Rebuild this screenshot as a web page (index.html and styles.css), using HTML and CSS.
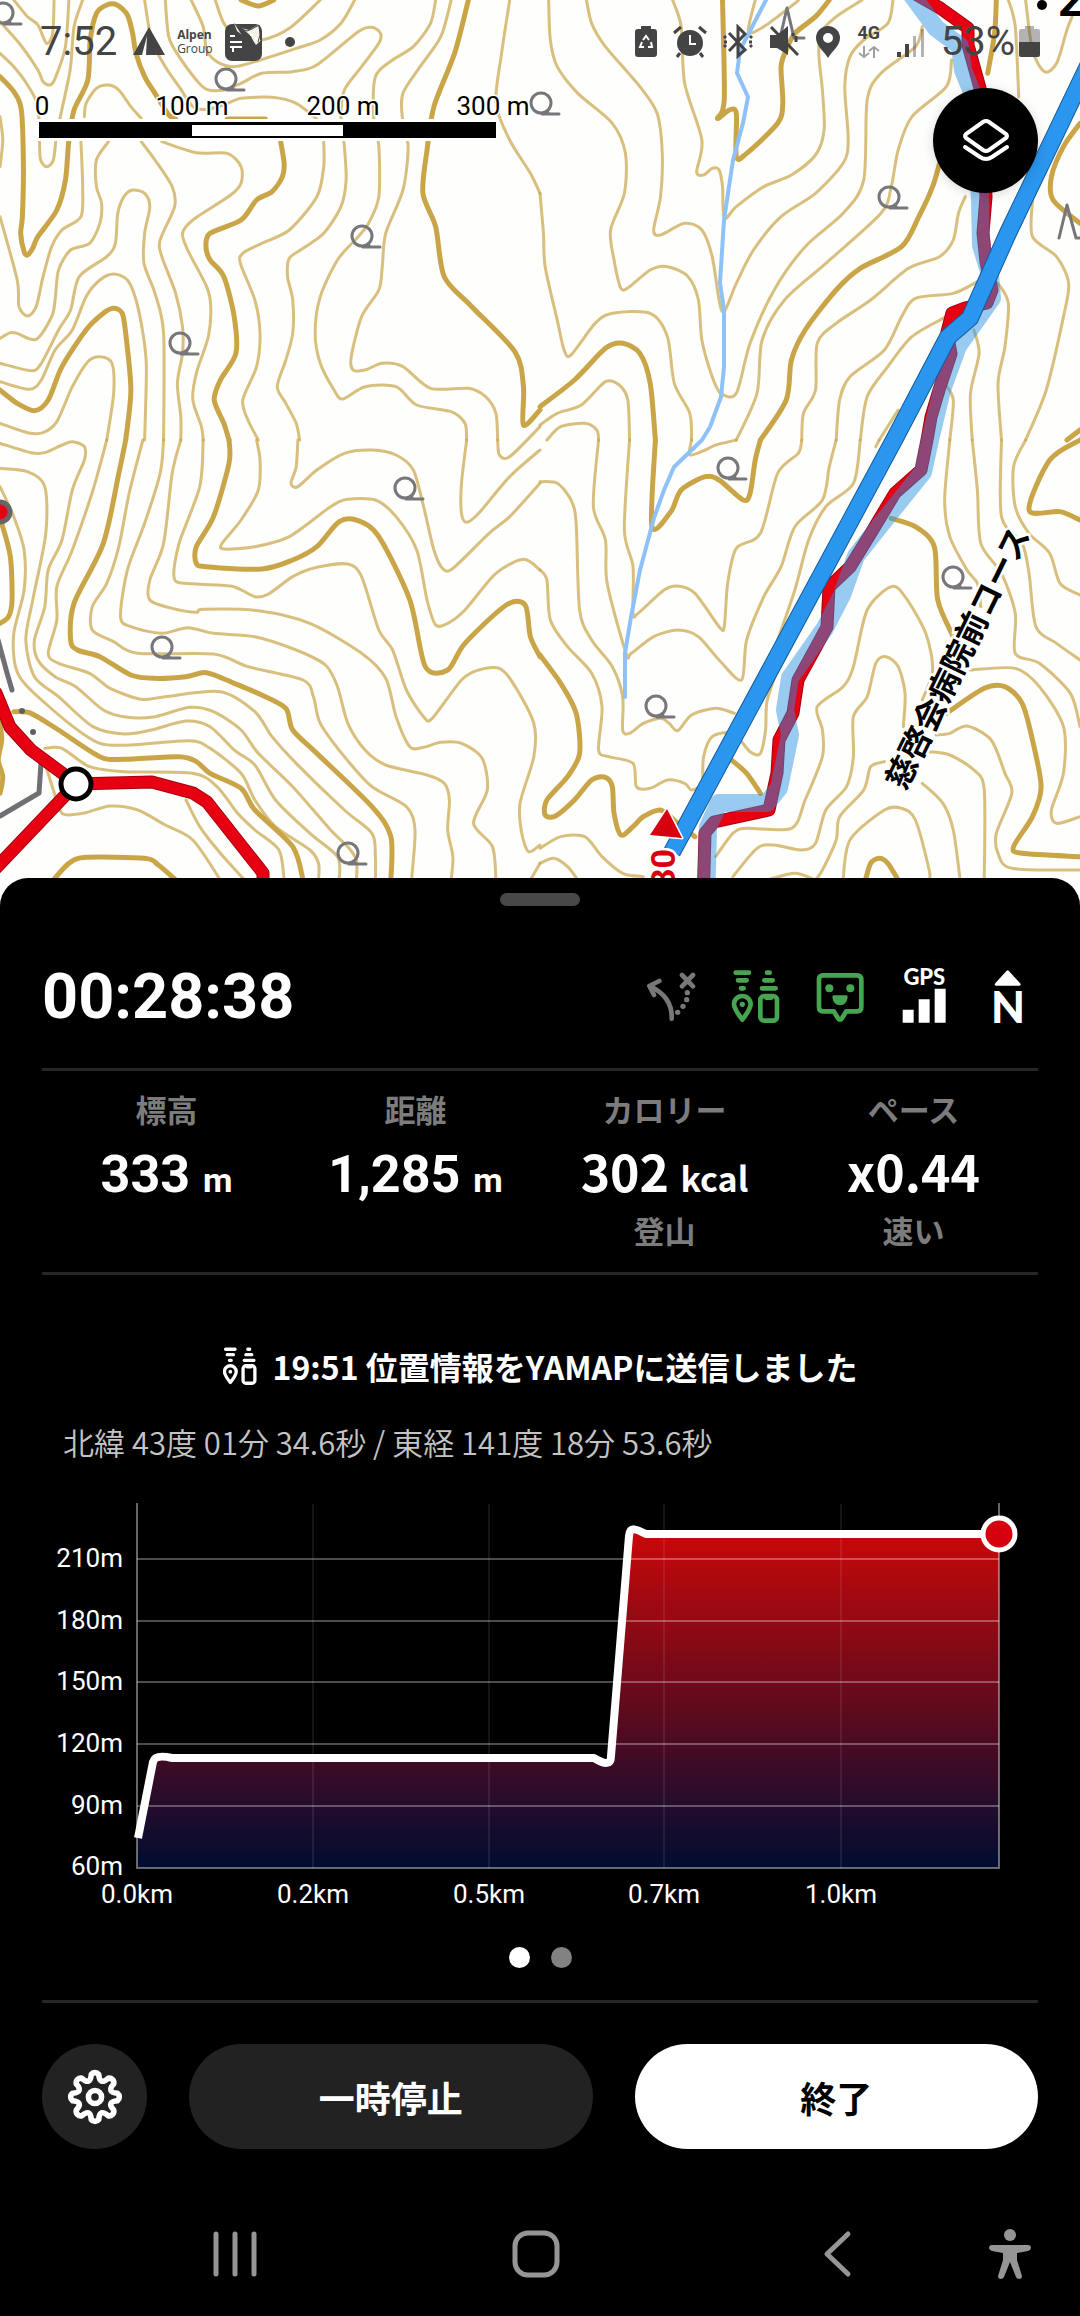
FILE: index.html
```html
<!DOCTYPE html>
<html lang="ja">

<head>
    <meta charset="UTF-8">
    <meta name="viewport" content="width=device-width, initial-scale=1.0">
    <title>YAMAP - 活動記録</title>
    <link rel="stylesheet" href="styles.css">
</head>

<body>
    <section class="map">
        <svg class="map-canvas" viewBox="0 0 1080 906" preserveAspectRatio="xMidYMin slice" aria-label="地図">
            <defs>
                <g id="broadleaf">
                    <circle r="10"></circle>
                    <path d="M6 8L8 11M1 11H18"></path>
                </g>
            </defs>

            <g id="contours"></g>

            <!-- River -->
            <path class="river" d="M766 0L752 27L740 50L737 73L748 97L743 123L733 160L724 220L720 283L724 310V367L721 397L710 427L702 440L674 467L664 490L654 518L640 570L631 617L625 653V697"></path>

            <!-- Side road -->
            <path class="road" d="M-2 640L7 673L12 690M41 763L39 793L0 816"></path>
            <circle class="road-dot" cx="22" cy="711" r="3"></circle>
            <circle class="road-dot" cx="33" cy="732" r="3"></circle>

            <g class="vegetation">
                <use href="#broadleaf" x="3" y="13"></use>
                <use href="#broadleaf" x="226" y="79"></use>
                <use href="#broadleaf" x="362" y="236"></use>
                <use href="#broadleaf" x="180" y="343"></use>
                <use href="#broadleaf" x="541" y="103"></use>
                <use href="#broadleaf" x="889" y="197"></use>
                <use href="#broadleaf" x="405" y="488"></use>
                <use href="#broadleaf" x="162" y="647"></use>
                <use href="#broadleaf" x="348" y="853"></use>
                <use href="#broadleaf" x="728" y="468"></use>
                <use href="#broadleaf" x="953" y="577"></use>
                <use href="#broadleaf" x="656" y="706"></use>
                <path d="M780 38L787 8L794 38H804M1059 238L1067 205L1076 238H1086"></path>
            </g>

            <!-- Trails -->
            <g class="trail">
                <path class="trail-edge" d="M-4 693L10 727L31 750L62 773L75 784L152 782L193 793L207 802L263 873V906M75 785L-4 868"></path>
                <path class="trail-line" d="M-4 693L10 727L31 750L62 773L75 784L152 782L193 793L207 802L263 873V906M75 785L-4 868"></path>
                <path class="trail-edge" d="M912 -8L940 8L968 28L968 45L980 88L986 197L983 233L986 262L992 290L987 303L965 308L952 313L947 332L951 354L939 390L931 417L927 440L921 470L895 493L871 533L850 567L829 587L827 627L798 680L793 713L779 740L777 773L769 810L714 822L705 833L703 906"></path>
                <path class="trail-line" d="M912 -8L940 8L968 28L968 45L980 88L986 197L983 233L986 262L992 290L987 303L965 308L952 313L947 332L951 354L939 390L931 417L927 440L921 470L895 493L871 533L850 567L829 587L827 627L798 680L793 713L779 740L777 773L769 810L714 822L705 833L703 906"></path>
            </g>
            <path class="traffic" d="M911 -6L936 28L960 46L963 70L972 92L980 200L981 245L990 275L992 298L958 346L942 390L930 440L923 472L882 523L856 556L842 595L825 628L790 678L785 710L790 735L779 788L767 803L719 803L708 827L706 906"></path>
            <path class="track-edge" d="M1100 41L1008 233L970 318L948 337L894 440L672 852"></path>
            <path class="track-line" d="M1100 41L1008 233L970 318L948 337L894 440L672 852"></path>

            <circle class="junction-off" cx="0" cy="512" r="10"></circle>
            <circle class="junction" cx="76" cy="784" r="15"></circle>

            <path class="arrow" d="M667 809L682 838L650 835Z"></path>
            <text class="minutes" transform="translate(675 849) rotate(-90)" text-anchor="end">30</text>
            <text class="course" transform="translate(958 658) rotate(-64)" text-anchor="middle" dy="11">慈啓会病院前コース</text>
            <circle cx="1042" cy="5" r="5"></circle>
            <text class="height-mark" x="1058" y="16">2</text>
        </svg>

        <header class="status-bar">
            <div class="status-group">
                <span class="status-text">7:52</span>
                <svg class="tent" width="32" height="36" viewBox="0 0 32 36"><path d="M16 3L32 31H13L14 12L9 31H0Z"></path></svg>
                <span class="alpen"><b>Alpen</b><span>Group</span></span>
                <svg width="38" height="38" viewBox="0 0 38 38">
                    <rect x="0" y="1" width="37" height="37" rx="7"></rect>
                    <path class="paper" d="M9 0L16 5L24 7L33 2L35 9V18L31 22L27 16L20 14L12 8Z"></path>
                    <path d="M9 0L18 14L30 23L26 13L18 6Z"></path>
                    <path class="sketch" d="M5 13H10M5 19H17M5 24H17M8 25V29M25 12H28M30 15L35 18"></path>
                    <path class="ears" d="M15 5L22 8L27 6L34 2L35 12L33 19"></path>
                </svg>
                <svg class="more" width="10" height="10" viewBox="0 0 10 10"><circle cx="5" cy="5" r="5"></circle></svg>
            </div>

            <div class="status-group status-right">
                <svg width="22" height="36" viewBox="0 0 22 36">
                    <path d="M6 2H16V5H19Q22 5 22 8V30Q22 33 19 33H3Q0 33 0 30V8Q0 5 3 5H6Z"></path>
                    <path class="sketch" d="M8 16L11 12L14 16M16 18L17 23H13M9 23H5L7 18"></path>
                </svg>
                <svg width="34" height="36" viewBox="0 0 34 36">
                    <circle cx="17" cy="19" r="13"></circle>
                    <path class="stroke" d="M1 9L8 3M33 9L26 3M7 29L4 33M27 29L30 33"></path>
                    <path class="sketch" d="M17 11V20H23"></path>
                </svg>
                <svg width="30" height="36" viewBox="0 0 30 36">
                    <path class="stroke" d="M6 9L22 26L15 32V3L22 10L6 27M1 12L3 14M1 23L3 21M27 14L29 12M27 21L29 23M1 18H4M26 18H29"></path>
                </svg>
                <svg width="30" height="36" viewBox="0 0 30 36">
                    <path d="M1 11H8L19 2V31L8 24H1Z"></path>
                    <path class="stroke" d="M2 3L29 31M24 9V12M27 12V18"></path>
                </svg>
                <svg width="26" height="36" viewBox="0 0 26 36">
                    <path fill-rule="evenodd" d="M13 2a12 12 0 0 1 12 12c0 8-8 13-12 20c-4-7-12-12-12-20a12 12 0 0 1 12-12zM13 9a5 5 0 1 0 0 10a5 5 0 1 0 0-10z"></path>
                </svg>
                <span class="network">4G
                    <svg width="22" height="14" viewBox="0 0 22 14"><path d="M6 1V12M1 8L6 12L11 8M16 13V2M11 6L16 2L21 6"></path></svg>
                </span>
                <svg width="28" height="36" viewBox="0 0 28 36">
                    <path d="M0 28H4V33H0zM8 20H12V33H8z"></path>
                    <path class="faded" d="M16 12H19V33H16zM24 5H27V33H24z"></path>
                </svg>
                <span class="battery">
                    <span class="status-text">53%</span>
                    <svg width="21" height="36" viewBox="0 0 21 36">
                        <path class="faded" d="M6 2H15V5H19Q21 5 21 7V18H0V7Q0 5 2 5H6Z"></path>
                        <path d="M0 18H21V31Q21 33 19 33H2Q0 33 0 31Z"></path>
                    </svg>
                </span>
            </div>
        </header>

        <svg class="scale-bar" width="540" height="60" viewBox="0 0 540 60" aria-label="縮尺">
            <rect class="scale-halo" x="36" y="34" width="463" height="22"></rect>
            <rect x="39" y="37" width="457" height="16"></rect>
            <rect class="scale-halo" x="192" y="40" width="151" height="11"></rect>
            <text x="42" y="30">0</text>
            <text x="192" y="30">100 m</text>
            <text x="343" y="30">200 m</text>
            <text x="493" y="30">300 m</text>
        </svg>

        <button class="layer-button" type="button" aria-label="レイヤー">
            <svg width="48" height="48" viewBox="0 0 48 48">
                <path d="M21 5Q24 3 27 5L44 17Q46 19 44 21L27 33Q24 35 21 33L4 21Q2 19 4 17ZM3 30L18 40Q24 44 30 40L45 30"></path>
            </svg>
        </button>
    </section>

    <main class="sheet">
        <div class="handle"></div>

        <div class="sheet-header">
            <h1>00:28:38</h1>
            <div class="indicators">
                <svg class="icon icon-off" viewBox="0 0 180 180">
                    <path d="M89 155Q92 90 25 58M52 42L22 57L36 84M120 24L153 58M153 24L120 58"></path>
                    <g class="solid">
                        <circle cx="107" cy="136" r="8"></circle>
                        <circle cx="123" cy="118" r="8"></circle>
                        <circle cx="134" cy="98" r="8"></circle>
                        <circle cx="136" cy="77" r="8"></circle>
                    </g>
                </svg>
                <svg class="icon icon-on" viewBox="0 0 180 180">
                    <g id="watch">
                        <path d="M29 17H69M36 40H62M45 64H53M123 17H131M115 40H140M108 64H149"></path>
                        <path d="M49 158C32 136 24 124 24 112A25 25 0 0 1 74 112C74 124 66 136 49 158Z"></path>
                        <circle class="solid" cx="49" cy="112" r="8"></circle>
                        <rect x="103" y="87" width="50" height="74" rx="12"></rect>
                        <path d="M121 92H135"></path>
                    </g>
                </svg>
                <svg class="icon icon-on" viewBox="0 0 180 180">
                    <path d="M39 25H141Q154 25 154 38V120Q154 133 141 133H109L96 154Q90 162 84 154L71 133H39Q27 133 27 120V38Q27 25 39 25Z"></path>
                    <g class="solid">
                        <circle cx="58" cy="64" r="12"></circle>
                        <circle cx="121" cy="64" r="12"></circle>
                        <path d="M72 85H109Q113 85 113 90Q110 115 90 115Q70 115 67 90Q67 85 72 85Z"></path>
                    </g>
                </svg>
                <svg class="icon icon-text" viewBox="0 0 180 180">
                    <text x="91" y="55" font-size="66">GPS</text>
                    <path d="M26 128H59V167H26zM74 97H107V167H74zM122 65H155V167H122z"></path>
                </svg>
                <svg class="icon icon-text" viewBox="0 0 180 180">
                    <path class="tip" d="M89 14L124 52H54Z"></path>
                    <text x="90" y="167" font-size="132">N</text>
                </svg>
            </div>
        </div>

        <dl class="stats">
            <div class="stat">
                <dt>標高</dt>
                <dd>333 <small>m</small></dd>
            </div>
            <div class="stat">
                <dt>距離</dt>
                <dd>1,285 <small>m</small></dd>
            </div>
            <div class="stat stat-jp">
                <dt>カロリー</dt>
                <dd>302 <small>kcal</small></dd>
                <dd class="note">登山</dd>
            </div>
            <div class="stat stat-jp">
                <dt>ペース</dt>
                <dd>x0.44</dd>
                <dd class="note">速い</dd>
            </div>
        </dl>

        <p class="message">
            <svg class="icon icon-small" viewBox="18 8 144 160"><use href="#watch"></use></svg>
            19:51 位置情報をYAMAPに送信しました
        </p>
        <p class="position">北緯 43度 01分 34.6秒 / 東経 141度 18分 53.6秒</p>

        <svg class="chart" viewBox="0 0 1080 440" aria-label="標高グラフ">
            <defs>
                <linearGradient id="elevation" gradientUnits="userSpaceOnUse" x1="0" y1="54" x2="0" y2="388">
                    <stop offset="0" stop-color="#c8080a"></stop>
                    <stop offset="0.5" stop-color="#640a1c"></stop>
                    <stop offset="0.8" stop-color="#270c2b"></stop>
                    <stop offset="1" stop-color="#000c30"></stop>
                </linearGradient>
            </defs>
            <path class="area" d="M137 388V358L152 280Q154 276 172 278H594Q611 290 612 276L628 54Q632 44 646 54H999V388Z"></path>
            <path class="grid" d="M137 79H999M137 141H999M137 202H999M137 264H999M137 326H999"></path>
            <path class="grid-weak" d="M313 24V388M489 24V388M664 24V388M841 24V388"></path>
            <path class="axis" d="M137 23V388H999V23"></path>
            <path class="line" d="M138 358L153 282Q155 274 172 278H594C604 284 611 286 611 276L629 56C630 46 636 49 646 54H999"></path>
            <circle class="current" cx="999" cy="54" r="16"></circle>
            <g class="label-y">
                <text x="123" y="87">210m</text>
                <text x="123" y="149">180m</text>
                <text x="123" y="210">150m</text>
                <text x="123" y="272">120m</text>
                <text x="123" y="334">90m</text>
                <text x="123" y="395">60m</text>
            </g>
            <g class="label-x">
                <text x="137" y="423">0.0km</text>
                <text x="313" y="423">0.2km</text>
                <text x="489" y="423">0.5km</text>
                <text x="664" y="423">0.7km</text>
                <text x="841" y="423">1.0km</text>
            </g>
        </svg>

        <div class="pager">
            <button class="dot active" type="button" aria-label="1ページ"></button>
            <button class="dot" type="button" aria-label="2ページ"></button>
        </div>

        <div class="actions">
            <button class="settings" type="button" aria-label="設定">
                <svg width="58" height="58" viewBox="-31 -31 62 62">
                    <path d="M-4 -24A5 5 0 0 1 4 -24Q5 -12 14 -20A5 5 0 0 1 20 -14Q12 -5 24 -4A5 5 0 0 1 24 4Q12 5 20 14A5 5 0 0 1 14 20Q5 12 4 24A5 5 0 0 1 -4 24Q-5 12 -14 20A5 5 0 0 1 -20 14Q-12 5 -24 4A5 5 0 0 1 -24 -4Q-12 -5 -20 -14A5 5 0 0 1 -14 -20Q-5 -12 -4 -24Z"></path>
                    <circle r="7"></circle>
                </svg>
            </button>
            <button class="pause" type="button">一時停止</button>
            <button class="finish" type="button">終了</button>
        </div>

        <nav class="nav-bar">
            <button type="button" aria-label="履歴">
                <svg width="46" height="52" viewBox="0 0 46 52"><path d="M4 6V46M23 6V46M42 6V46"></path></svg>
            </button>
            <button type="button" aria-label="ホーム">
                <svg width="52" height="52" viewBox="0 0 52 52"><rect x="5" y="5" width="42" height="42" rx="13"></rect></svg>
            </button>
            <button type="button" aria-label="戻る">
                <svg width="30" height="52" viewBox="0 0 30 52"><path d="M26 6L5 26L26 46"></path></svg>
            </button>
            <button type="button" aria-label="ユーザー補助">
                <svg class="person" width="44" height="52" viewBox="0 0 44 52">
                    <circle cx="22" cy="7" r="6"></circle>
                    <path d="M4 17H40Q43 17 43 20Q43 22 40 23L29 25V32L34 48Q34 51 31 51Q29 51 28 49L22 34L16 49Q15 51 13 51Q10 51 10 48L15 32V25L4 23Q1 22 1 20Q1 17 4 17Z"></path>
                </svg>
            </button>
        </nav>
    </main>

    <script src="script.js"></script>
</body>

</html>
```
FILE: styles.css
```css
:root {
    --sheet: #000000;
    --surface: #222222;
    --divider: #262626;
    --muted: #7c7c7c;
    --green: #47a551;
    --red: #e60012;
    --track: #2b96ee;
    --contour: #c9a548;
    --status: #444444;
    --gutter: 42px;
}

* {
    margin: 0;
    padding: 0;
    box-sizing: border-box;
}

body {
    font-family: Roboto, 'Noto Sans CJK JP', sans-serif;
    background-color: var(--sheet);
    color: #ffffff;
    display: flex;
    flex-direction: column;
    min-height: 100vh;
    overflow-x: hidden;
}

button {
    border: none;
    background: none;
    color: inherit;
    font-family: inherit;
    cursor: pointer;
    display: flex;
    align-items: center;
    justify-content: center;
}

/* Map */
.map {
    position: relative;
    flex: 1;
    min-height: 400px;
    background-color: #fefefd;
    overflow: hidden;
}

.map-canvas {
    position: absolute;
    width: 100%;
    height: 100%;
}

.map-canvas path {
    fill: none;
    stroke-linecap: round;
    stroke-linejoin: round;
}

.contour {
    stroke: var(--contour);
    stroke-width: 3px;
    opacity: 0.7;
    vector-effect: non-scaling-stroke;
}

.contour.index {
    stroke-width: 5px;
    opacity: 1;
}

.river {
    stroke: #8dc1f8;
    stroke-width: 4px;
}

.road {
    stroke: #707074;
    stroke-width: 5px;
}

.road-dot {
    fill: #606064;
}

.vegetation {
    fill: none;
    stroke: #77777b;
    stroke-width: 3px;
}

.trail-edge {
    stroke: #a3000f;
    stroke-width: 13px;
}

.trail-line {
    stroke: var(--red);
    stroke-width: 11px;
}

.traffic {
    stroke: rgba(43, 147, 225, 0.48);
    stroke-width: 18px;
}

.track-edge {
    stroke: #145a9e;
    stroke-width: 18px;
}

.track-line {
    stroke: var(--track);
    stroke-width: 16px;
}

.map-canvas .track-edge,
.map-canvas .track-line {
    stroke-linecap: butt;
}

.junction {
    fill: #ffffff;
    stroke: #000000;
    stroke-width: 5px;
}

.junction-off {
    fill: var(--red);
    stroke: #66666a;
    stroke-width: 5px;
}

.map-canvas .arrow {
    fill: #d7000f;
    stroke: #ffffff;
    stroke-width: 3px;
    paint-order: stroke;
}

.minutes,
.course {
    font-weight: 700;
    stroke: #ffffff;
    stroke-width: 5px;
    paint-order: stroke;
}

.minutes {
    fill: #d7000f;
    font-size: 34px;
}

.course {
    font-size: 32px;
}

.height-mark {
    font-size: 46px;
    font-weight: 700;
}

.status-bar {
    position: absolute;
    top: 0;
    left: 0;
    width: 100%;
    height: 84px;
    padding: 0 40px;
    display: flex;
    align-items: center;
    justify-content: space-between;
    color: var(--status);
    fill: var(--status);
}

.status-group {
    display: flex;
    align-items: center;
    gap: 12px;
}

.status-right {
    gap: 16px;
}

.status-text {
    font-size: 40px;
    line-height: 44px;
}

.tent {
    margin-left: 4px;
}

.more {
    margin-left: 10px;
}

.alpen {
    display: flex;
    flex-direction: column;
    font-family: 'Open Sans', sans-serif;
    font-size: 12px;
    line-height: 14px;
}

.paper {
    fill: #f6f2e6;
}

.sketch,
.stroke,
.ears {
    fill: none;
    stroke: #ffffff;
    stroke-width: 2px;
}

.stroke {
    stroke: var(--status);
    stroke-width: 3px;
}

.ears {
    stroke: var(--status);
    stroke-width: 1px;
}

.faded {
    opacity: 0.4;
}

.network {
    display: flex;
    flex-direction: column;
    align-items: center;
    gap: 4px;
    width: 24px;
    font-size: 18px;
    font-weight: 700;
    line-height: 16px;
}

.network path {
    fill: none;
    stroke: #a0a0a0;
    stroke-width: 2px;
}

.battery {
    display: flex;
    align-items: center;
    gap: 4px;
}

.scale-bar {
    position: absolute;
    top: 85px;
    left: 0;
    font-size: 26px;
    text-anchor: middle;
}

.scale-bar text {
    stroke: #ffffff;
    stroke-width: 3px;
    paint-order: stroke;
}

.scale-halo {
    fill: #ffffff;
}

.layer-button {
    position: absolute;
    top: 88px;
    right: var(--gutter);
    width: 105px;
    height: 105px;
    border-radius: 50%;
    background-color: #000000;
    box-shadow: 0 2px 12px rgba(0, 0, 0, 0.15);
}

.layer-button path {
    fill: none;
    stroke: #ffffff;
    stroke-width: 4px;
    stroke-linecap: round;
}

/* Bottom sheet */
.sheet {
    position: relative;
    margin-top: -28px;
    padding-top: 15px;
    border-radius: 28px 28px 0 0;
    background-color: var(--sheet);
}

.handle {
    width: 80px;
    height: 13px;
    margin: 0 auto;
    border-radius: 7px;
    background-color: #484848;
}

.sheet-header {
    display: flex;
    align-items: center;
    justify-content: space-between;
    margin: 0 var(--gutter);
    padding: 55px 0 35px;
    border-bottom: 3px solid var(--divider);
}

.sheet-header h1 {
    font-size: 63px;
    font-weight: 700;
    line-height: 72px;
}

.indicators {
    display: flex;
    gap: 24px;
}

.icon {
    width: 60px;
    height: 60px;
    fill: none;
    stroke: currentColor;
    stroke-width: 14px;
    stroke-linecap: round;
    stroke-linejoin: round;
}

.icon .solid {
    fill: currentColor;
    stroke: none;
}

.icon-off {
    color: #787878;
}

.icon-on {
    color: var(--green);
}

.icon-text {
    fill: #ffffff;
    stroke: none;
    font-family: Lato, sans-serif;
    font-weight: 900;
    text-anchor: middle;
}

.icon-text .tip {
    stroke: #ffffff;
    stroke-width: 8px;
}

.icon-small {
    width: 34px;
    height: 38px;
}

.stats {
    display: grid;
    grid-template-columns: repeat(4, 1fr);
    margin: 0 var(--gutter);
    padding: 16px 0 20px;
    border-bottom: 3px solid var(--divider);
    text-align: center;
}

.stat dt,
.stat .note {
    color: var(--muted);
    font-family: 'Noto Sans CJK JP', sans-serif;
    font-size: 31px;
    font-weight: 700;
    line-height: 44px;
}

.stat dd {
    font-size: 52px;
    font-weight: 700;
    line-height: 60px;
    margin-top: 14px;
}

.stat-jp dd {
    font-family: 'Noto Sans CJK JP', sans-serif;
    font-size: 50px;
    margin-top: 9px;
}

.stat .note {
    margin-top: 8px;
}

.stat small {
    font-size: 34px;
    line-height: 44px;
}

.message {
    display: flex;
    align-items: center;
    justify-content: center;
    gap: 16px;
    padding-top: 69px;
    font-family: 'Noto Sans CJK JP', sans-serif;
    font-size: 32px;
    font-weight: 700;
    line-height: 44px;
}

.position {
    margin: 32px 63px 16px;
    color: #c4c4c4;
    font-family: 'Noto Sans CJK JP', sans-serif;
    font-size: 31px;
    font-weight: 350;
    line-height: 44px;
}

.chart {
    display: block;
    width: 100%;
    fill: none;
    font-size: 26px;
}

.area {
    fill: url(#elevation);
}

.grid,
.grid-weak,
.axis {
    stroke: rgba(255, 255, 255, 0.3);
    stroke-width: 2px;
}

.grid-weak {
    stroke: rgba(255, 255, 255, 0.08);
}

.axis {
    stroke: rgba(255, 255, 255, 0.4);
}

.line {
    stroke: #ffffff;
    stroke-width: 8px;
    stroke-linejoin: round;
}

.current {
    fill: #d7000f;
    stroke: #ffffff;
    stroke-width: 5px;
}

.label-x,
.label-y {
    fill: #ffffff;
    text-anchor: middle;
}

.label-y {
    text-anchor: end;
}

.pager {
    display: flex;
    justify-content: center;
    gap: 21px;
    padding: 27px 0 32px;
}

.dot {
    width: 21px;
    height: 21px;
    border-radius: 50%;
    background-color: #828282;
}

.dot.active {
    background-color: #ffffff;
}

.actions {
    display: grid;
    grid-template-columns: 105px 1fr 1fr;
    gap: var(--gutter);
    margin: 0 var(--gutter);
    padding: 41px 0 43px;
    border-top: 3px solid var(--divider);
}

.actions button {
    height: 105px;
    border-radius: 53px;
    background-color: var(--surface);
    font-family: 'Noto Sans CJK JP', sans-serif;
    font-size: 36px;
    font-weight: 700;
}

.actions .finish {
    background-color: #ffffff;
    color: #000000;
}

.settings svg {
    fill: none;
    stroke: #ffffff;
    stroke-width: 6px;
    stroke-linejoin: round;
}

.nav-bar {
    display: grid;
    grid-template-columns: 1fr 1fr 1fr 44px;
    height: 124px;
    padding: 0 48px 0 84px;
}

.nav-bar svg {
    fill: none;
    stroke: #959595;
    stroke-width: 5px;
    stroke-linecap: round;
    stroke-linejoin: round;
}

.nav-bar .person {
    fill: #959595;
    stroke: none;
}
```
FILE: script.js
```js
// Contour lines by map tile. Points are in tile units (1568 x 1320 per tile).
const tiles = [
    {
        x: 0, y: 0,
        index: [
            '0,230 40,275 62,330 68,500 65,650 60,700 70,755 80,765 95,745 110,710 165,630 190,540 200,420 215,330 255,240 262,120 280,40 310,15 340,15 370,45 385,100 395,160 420,230 450,280 490,345 510,357',
            '700,0 750,18 795,0',
            '660,357 770,357',
            '1360,0 1320,160 1260,320 1240,450 1228,580 1265,680 1290,830 1370,920 1495,1055 1520,1160 1520,1275 1568,1230',
            '815,425 825,490 820,530 790,575 745,600 700,660 610,700 598,740 610,780 650,830 680,950 685,1060 640,1140 622,1200 650,1270 665,1320',
            '0,1170 50,1210 100,1232 140,1200 180,1100 250,990 300,940 330,925 355,940 365,1000 380,1170 365,1320'
        ],
        minor: [
            '40,0 80,50 110,75 135,130 153,100 157,0',
            '0,65 60,135 110,210 125,245 145,255 160,235 190,140 200,0',
            '0,160 40,200 80,255 110,320 115,440 118,480 135,500 155,480 165,400 190,280 205,200 215,80 240,0',
            '245,350 250,310 280,265 315,255 345,270 380,320 410,355',
            '420,0 440,120 480,200 520,260 560,320 600,328 650,315 700,295 790,292 860,310 920,357',
            '480,0 490,110 520,170 570,240 600,268 650,270 700,250 760,220 850,215 920,195 1040,95 1080,82 1105,100 1100,130 1050,200 1000,270 990,350 1000,440 1005,540 990,620 940,700 880,745 840,775 835,830 850,900 850,1000 830,1080 805,1160 830,1210 860,1270 870,1320',
            '555,0 590,80 600,150 630,185 680,200 740,185 860,145 930,120 990,70 1030,0',
            '625,0 650,70 690,115 760,120 840,85 930,0',
            '1265,0 1250,70 1200,140 1140,180 1090,230 1085,350 1100,440 1100,590 1070,670 1040,710 980,780 930,890 915,1000 930,1090 970,1170 995,1197 1060,1160 1150,1160 1210,1215 1310,1235 1350,1270 1355,1320',
            '1310,0 1280,110 1220,200 1170,280 1168,350 1185,440 1170,570 1120,700 1110,800 1100,870 1050,950 1020,1070 1025,1110 1060,1110 1110,1090 1170,1100 1250,1165 1360,1165 1410,1190 1440,1240 1445,1320',
            '1480,0 1455,170 1440,310 1480,420 1540,520 1568,580',
            '470,425 570,458 660,460 700,500 700,550 670,585 560,660 530,700 545,750 600,860 612,920 605,1010 570,1120 560,1200 585,1280 590,1320',
            '940,425 940,500 920,590 840,690 760,730 705,760 698,790 740,900 755,1000 745,1100 705,1200 720,1260 750,1320',
            '410,425 450,480 500,560 507,620 465,720 470,770 510,880 530,980 530,1060 515,1150 525,1250 525,1320',
            '315,425 280,480 280,560 295,610 290,670 260,730 205,750 170,810 160,900 150,950 105,1018 50,1000 30,998 0,1015',
            '235,425 240,560 235,650 180,690 150,740 125,830 105,920 80,948 55,920 50,840 0,650',
            '0,350 8,420 0,500',
            '0,1090 90,1112 120,1090 170,990 205,930 230,830 310,770 335,730 342,640 360,590 385,570 420,580 435,620 420,700 418,790 450,880 475,1000 475,1320',
            '0,1145 85,1168 120,1140 160,1050 210,990 250,890 290,840 330,822 370,840 395,900 415,1000 425,1100 420,1320',
            '0,1270 80,1298 125,1298 165,1265 210,1160 255,1085 290,1070 325,1090 330,1180 310,1320'
        ]
    },
    {
        x: 540, y: 0,
        index: [
            '640,1320 715,1200 730,1080 770,990 860,870 930,805 1050,740 1100,650 1140,560 1160,490',
            '530,0 535,300 515,355 550,330 570,340 570,470 600,460 690,370 705,310 700,200 715,150 740,100 800,50 840,0',
            '1325,0 1320,100 1300,220',
            '1568,370 1520,440 1485,530 1490,600 1568,670',
            '1530,1320 1568,1290',
            '0,1220 100,1140 190,1045 240,1030 290,1060 320,1150 335,1320'
        ],
        minor: [
            '0,580 10,700 15,800 50,960 70,1050 90,1065 160,970 210,940 320,940 370,1010 390,1150 435,1240 440,1320',
            '25,0 30,120 50,200 110,280 210,370 248,460 245,580 205,690 215,780 235,865 260,860 320,810 370,800 430,830 460,900 470,1020 500,1130 525,1180 570,1180 610,1030 680,870 770,740 880,640 940,540 950,300 990,220 1090,140 1110,80',
            '135,0 150,70 190,140 290,260 340,340 355,460 350,590 330,690 350,705 420,670 470,690 500,770 520,900 535,935 570,850 620,750 700,650 800,580 880,490 895,420 885,260 900,170 940,120 1010,70 1025,0',
            '385,0 410,80 420,250 470,420 455,515 475,525 500,505 520,510 530,560 535,655 570,620 650,560 730,525 800,465 825,390 820,270 810,170 815,100 860,50 935,0',
            '625,0 605,95 650,80 740,10 750,0',
            '570,1320 630,1180 645,1020 710,900 830,790 990,640 1020,560 1040,450 1080,350 1180,260 1195,180',
            '760,1320 765,1240 800,1170 805,1030 860,970 960,900 1070,805 1160,770 1200,720 1215,640 1235,590',
            '860,1320 870,1200 900,1130 1000,1050 1050,950 1090,895 1200,880 1270,845',
            '930,1320 950,1190 1010,1100 1080,1010 1180,950',
            '985,1320 1040,1230',
            '1360,0 1380,80 1390,290',
            '1410,0 1430,150 1465,215 1500,190 1530,90 1545,50',
            '1430,600 1430,710 1500,770 1535,850 1520,950 1470,1170 1410,1320',
            '1330,850 1360,910 1350,1040 1330,1150 1340,1320',
            '1260,990 1275,1060 1250,1180 1255,1320',
            '1175,1150 1200,1200 1190,1320',
            '0,1275 50,1240 120,1215 190,1145 230,1155 255,1200 260,1320',
            '20,1320 60,1280 130,1270 165,1290 170,1320'
        ]
    },
    {
        x: 0, y: 440,
        index: [
            '365,0 345,100 300,310 215,490 205,600 225,630 290,650 380,705 450,715 540,710 600,698 680,730 760,765 830,805 850,870 920,940 1080,1100 1135,1190 1135,1320',
            '665,0 665,70 620,230 570,320 570,370 600,380 760,387 850,360 920,320 985,245 1040,242 1100,290 1190,480 1235,680 1300,690 1350,610 1470,495 1525,495 1540,590 1568,650',
            '40,815 90,820 170,870 290,950 360,958 520,950 570,965 610,1000 700,1045 740,1110 850,1220 880,1320',
            '155,1320 200,1270 250,1252 420,1255 460,1275 510,1320',
            '5,250 30,350 35,480 25,530 0,550',
            '0,850 5,900 -5,960 8,1010 0,1060'
        ],
        minor: [
            '415,0 375,160 345,320 310,430 268,500 268,570 330,605 400,640 620,642 720,680 880,720 910,770 930,850 1000,950 1080,1040 1180,1100 1205,1170 1195,1320',
            '475,0 465,100 420,250 370,390 350,530 380,560 470,580 545,563 620,580 740,590 860,630 945,675 980,740 1010,850 1060,930 1120,975 1240,1005 1290,1030 1305,1080 1300,1170 1315,1250 1310,1320',
            '525,0 500,100 475,310 435,420 435,480 500,505 570,517 590,508 750,512 900,550 1050,640 1120,715 1150,830 1190,920 1230,922 1280,907 1340,910 1400,955 1415,1050 1375,1150 1430,1220 1440,1320',
            '590,0 580,140 520,310 505,410 535,430 670,438 740,470 780,462 850,410 920,382 1010,372 1050,410 1100,570 1140,630 1180,750 1230,830 1255,835 1340,720 1390,690 1450,685 1490,730 1550,850 1550,950 1510,1090 1515,1180 1535,1235 1568,1215',
            '745,0 755,60 750,150 700,240 645,310 650,327 740,320 840,290 960,200 1010,178 1090,180 1150,230 1210,330 1240,480 1265,555 1300,550 1350,510 1440,400 1520,358 1568,390',
            '865,0 860,80 845,130 865,140 920,90 1000,40 1080,30 1150,45 1200,90 1230,200 1260,330 1285,385 1315,385 1420,280 1480,230 1568,130',
            '1355,0 1340,130 1340,220 1355,247 1390,220 1480,110 1568,30',
            '1445,0 1450,45 1480,50 1568,-40',
            '310,0 270,150 210,330 165,440 165,540 140,640 170,670 260,700 320,745 410,778 480,770 640,755 740,815 790,890 860,970 1000,1110 1080,1180 1090,1250 1090,1320',
            '0,10 90,38 130,38 180,15 210,5 245,20 245,60 210,150 180,300 140,390 130,500 100,600 110,660 160,710 220,740 300,810 370,832 450,830 550,802 620,815 700,870 750,940 850,1040 960,1170 1010,1220 1035,1260 1035,1320',
            '0,85 80,95 130,140 133,280 95,480 75,600 100,710 170,770 270,860 360,882 440,870 540,843 610,860 680,930 740,975 800,1080 900,1180 980,1250 985,1320',
            '0,140 40,230 70,330 70,450 40,580 45,680 80,740 200,850 290,910 380,915 550,902 610,925 700,1000 740,1080 800,1160 900,1230 925,1270 925,1320',
            '130,925 180,925 260,980 360,995 560,1000 630,1040 690,1120 740,1170 810,1230 825,1320',
            '540,1080 580,1160 640,1240 710,1320',
            '125,950 155,1050 180,1120 240,1120 320,1098 400,1110 480,1155 560,1200 640,1320',
            '1540,1320 1568,1270'
        ]
    },
    {
        x: 540, y: 440,
        index: [
            '335,0 325,260 380,215 410,150 480,110 520,120 590,180 610,160 625,60 640,0',
            '0,645 60,730 105,820 115,940 80,1010 20,1080 15,1125 45,1128 100,1080 150,1020 190,1012 210,1040 215,1120 235,1185 270,1160 300,1130 350,1110 400,1150 450,1190',
            '550,955 600,1000 640,1060',
            '1020,235 1090,260 1145,320 1155,480 1200,590',
            '1568,0 1480,60 1420,210 1510,215 1568,240',
            '1180,820 1290,745 1350,740 1400,790 1430,900 1455,1040 1430,1130 1375,1220 1400,1240 1568,1250',
            '945,1320 960,1270 985,1255 1010,1270 1040,1320'
        ],
        minor: [
            '170,0 155,200 190,300 195,430 250,640 265,640 330,590 400,570 460,590 520,660 585,720 600,600 650,470 700,380 740,260 820,180 840,80 860,0',
            '260,0 245,270 270,380 270,520 285,520 360,450 400,438 450,460 520,560 535,560 545,430 570,325 640,280 690,100 750,40 760,0',
            '440,0 435,45 480,30 510,15 570,0',
            '930,0 910,130 830,200 780,300 740,450 690,600',
            '0,125 50,130 90,180 105,250 115,510 150,600 210,680 240,770 240,870 260,880 300,850 350,835 375,850 400,872 440,825 510,805 565,820',
            '0,390 20,420 30,540 80,620 150,700 180,800 170,930 200,950 270,970 280,1040 320,1045 370,1020 420,1030 440,1050 470,1030 475,950 500,890 560,880 610,935 640,940 655,870 660,780 700,660',
            '0,1225 60,1190 130,1190 180,1250 240,1300 300,1310',
            '0,1270 40,1255 80,1280 110,1320',
            '985,0 975,20',
            '1190,0 1175,180 1190,290 1240,390 1270,430 1280,500',
            '1255,0 1270,150 1280,310 1340,400 1380,520 1380,640 1450,670 1540,760 1568,860',
            '1340,0 1340,230 1400,310 1420,400 1440,560 1500,610 1568,660',
            '1410,0 1375,80 1380,200 1420,280 1480,340 1510,430 1568,465',
            '1110,780 1140,690 1120,580 1060,470 1020,440 950,510 910,680 880,740 805,800 820,870 820,950 770,1080 730,1165 600,1165 560,1180 510,1250',
            '1055,860 1060,760 1040,680 1005,650 975,670 950,770 910,830 910,950 890,1040 830,1110 800,1210 760,1230 680,1215 630,1225 560,1310',
            '1250,690 1380,685 1450,740 1520,860 1520,1000 1485,1110 1500,1150 1568,1130',
            '1150,885 1190,880 1240,858 1310,900 1350,1000 1370,1060 1325,1180 1330,1240 1370,1285 1568,1290',
            '1130,935 1190,945 1260,990 1290,1050 1290,1320',
            '1110,1030 1170,1090 1200,1170 1220,1320',
            '1000,965 960,980 940,1050 870,1130 860,1200 820,1290 800,1320',
            '880,1320 900,1200 1000,1110 1050,1105 1090,1140 1130,1290 1130,1320',
            '660,1320 740,1300 800,1320'
        ]
    }
];

const SVG = 'http://www.w3.org/2000/svg';
const layer = document.getElementById('contours');

// Turn a list of points into a soft curve
function smooth(points) {
    const p = points.split(' ').map(pair => pair.split(',').map(Number));
    let d = `M${p[0]}`;
    for (let i = 0; i < p.length - 1; i++) {
        const before = p[i - 1] || p[i];
        const after = p[i + 2] || p[i + 1];
        const c1 = p[i].map((v, k) => v + (p[i + 1][k] - before[k]) / 7);
        const c2 = p[i + 1].map((v, k) => v - (after[k] - p[i][k]) / 7);
        d += `C${c1} ${c2} ${p[i + 1]}`;
    }
    return d;
}

tiles.forEach(tile => {
    const group = document.createElementNS(SVG, 'g');
    group.setAttribute('transform', `translate(${tile.x} ${tile.y}) scale(${540 / 1568} ${440 / 1320})`);
    ['minor', 'index'].forEach(kind => {
        tile[kind].forEach(points => {
            const path = document.createElementNS(SVG, 'path');
            path.setAttribute('class', `contour ${kind}`);
            path.setAttribute('d', smooth(points));
            group.appendChild(path);
        });
    });
    layer.appendChild(group);
});
```
